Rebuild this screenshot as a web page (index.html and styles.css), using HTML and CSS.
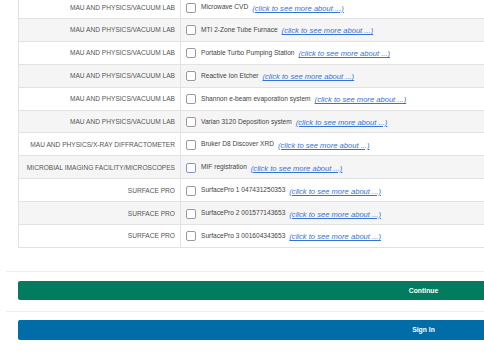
FILE: index.html
```html
<!DOCTYPE html>
<html lang="en">

<head>
    <meta charset="UTF-8">
    <meta name="viewport" content="width=device-width, initial-scale=1.0">
    <title>Equipment registration</title>
    <link rel="stylesheet" href="styles.css">
</head>

<body>
    <div class="page">
        <div class="content">
            <div class="equipment">
                <div class="row">
                    <div class="group">MAU AND PHYSICS/VACUUM LAB</div>
                    <div class="item"><span class="box"></span><span class="name">Microwave CVD</span><a href="#" class="more">(click to see more about ...)</a></div>
                </div>
                <div class="row odd">
                    <div class="group">MAU AND PHYSICS/VACUUM LAB</div>
                    <div class="item"><span class="box"></span><span class="name">MTI 2-Zone Tube Furnace</span><a href="#" class="more">(click to see more about ...)</a></div>
                </div>
                <div class="row">
                    <div class="group">MAU AND PHYSICS/VACUUM LAB</div>
                    <div class="item"><span class="box"></span><span class="name">Portable Turbo Pumping Station</span><a href="#" class="more">(click to see more about ...)</a></div>
                </div>
                <div class="row odd">
                    <div class="group">MAU AND PHYSICS/VACUUM LAB</div>
                    <div class="item"><span class="box"></span><span class="name">Reactive Ion Etcher</span><a href="#" class="more">(click to see more about ...)</a></div>
                </div>
                <div class="row">
                    <div class="group">MAU AND PHYSICS/VACUUM LAB</div>
                    <div class="item"><span class="box"></span><span class="name">Shannon e-beam evaporation system</span><a href="#" class="more">(click to see more about ...)</a></div>
                </div>
                <div class="row odd">
                    <div class="group">MAU AND PHYSICS/VACUUM LAB</div>
                    <div class="item"><span class="box"></span><span class="name">Varian 3120 Deposition system</span><a href="#" class="more">(click to see more about ...)</a></div>
                </div>
                <div class="row">
                    <div class="group">MAU AND PHYSICS/X-RAY DIFFRACTOMETER</div>
                    <div class="item"><span class="box"></span><span class="name">Bruker D8 Discover XRD</span><a href="#" class="more">(click to see more about ...)</a></div>
                </div>
                <div class="row odd">
                    <div class="group">MICROBIAL IMAGING FACILITY/MICROSCOPES</div>
                    <div class="item"><span class="box focus"></span><span class="name">MIF registration</span><a href="#" class="more">(click to see more about ...)</a></div>
                </div>
                <div class="row">
                    <div class="group">SURFACE PRO</div>
                    <div class="item"><span class="box"></span><span class="name">SurfacePro 1 047431250353</span><a href="#" class="more">(click to see more about ...)</a></div>
                </div>
                <div class="row odd">
                    <div class="group">SURFACE PRO</div>
                    <div class="item"><span class="box"></span><span class="name">SurfacePro 2 001577143653</span><a href="#" class="more">(click to see more about ...)</a></div>
                </div>
                <div class="row">
                    <div class="group">SURFACE PRO</div>
                    <div class="item"><span class="box"></span><span class="name">SurfacePro 3 001604343653</span><a href="#" class="more">(click to see more about ...)</a></div>
                </div>
            </div>

            <div class="actions first">
                <button class="btn btn-continue">Continue</button>
            </div>
            <div class="actions">
                <button class="btn btn-signin">Sign In</button>
            </div>
        </div>
    </div>
</body>

</html>
```

FILE: styles.css
```css
* {
    box-sizing: border-box;
}

body {
    margin: 0;
    background: #fff;
    font-family: "Liberation Sans", Arial, sans-serif;
    color: #555;
}

.page {
    width: 100%;
    height: 358px;
    overflow: hidden;
}

.content {
    width: 830px;
    margin-left: 6px;
}

.equipment {
    margin: -3.9px 0 0 12px;
    border-left: 1px solid #e2e2e2;
}

.row {
    display: flex;
    height: 22.9px;
    border-bottom: 1px solid #e2e2e2;
    background: #fff;
}

.row.odd {
    background: #f5f5f5;
}

.group {
    width: 162px;
    flex: none;
    border-right: 1px solid #e2e2e2;
    padding: 0 5px 0 0;
    display: flex;
    align-items: center;
    justify-content: flex-end;
    font-size: 6.6px;
    white-space: nowrap;
}

.item {
    display: flex;
    align-items: center;
    padding-left: 5px;
    white-space: nowrap;
}

.box {
    width: 10px;
    height: 10px;
    border: 1px solid #9a9a9a;
    border-radius: 2px;
    background: #fff;
    margin-right: 5px;
    margin-top: 1px;
}

.box.focus {
    border-color: #8593da;
}

.name {
    font-size: 6.6px;
    color: #444;
    margin-top: -1px;
}

.more {
    font-size: 7.6px;
    font-style: italic;
    color: #3672d8;
    margin-left: 4px;
    margin-top: 2px;
}

.actions {
    border-top: 1px solid #eee;
    padding: 8px 0 12px 12px;
}

.actions.first {
    margin-top: 23px;
    padding-top: 9px;
    padding-bottom: 11px;
}

.btn {
    display: block;
    width: 811px;
    height: 19px;
    border: none;
    border-radius: 2px;
    color: #fff;
    font-family: "Liberation Sans", Arial, sans-serif;
    font-size: 6.8px;
    font-weight: bold;
    padding: 0;
}

.btn-continue {
    background: #027b5f;
}

.btn-signin {
    height: 20px;
    background: #006da8;
}
```
